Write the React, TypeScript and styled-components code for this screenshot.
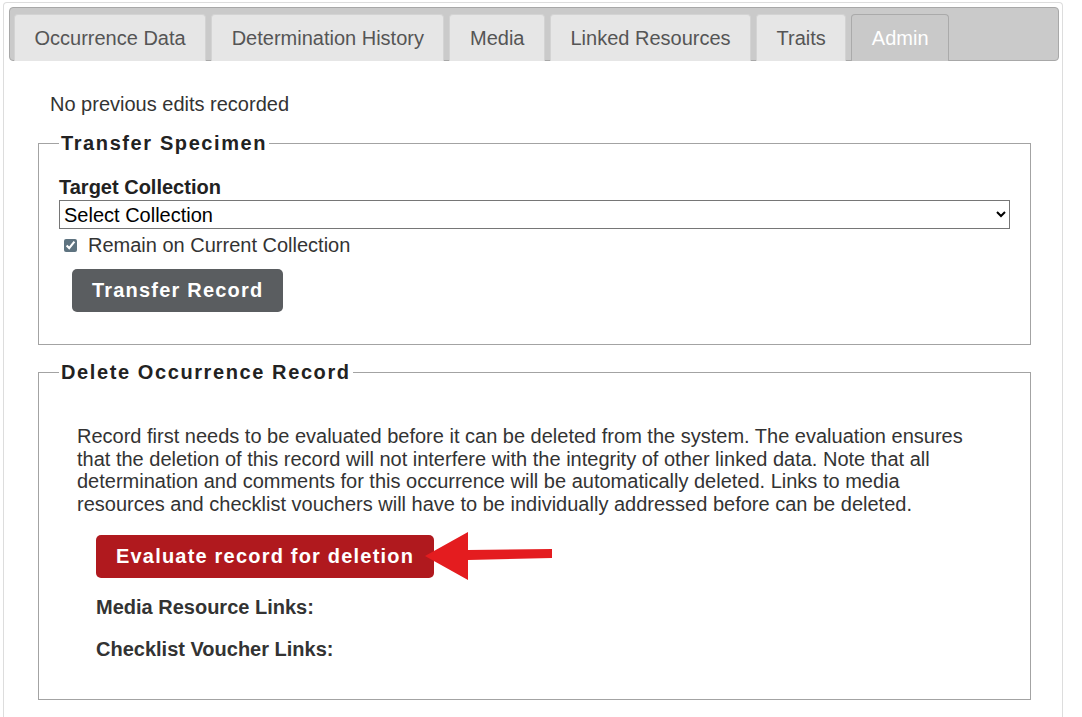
import styled, { createGlobalStyle } from "styled-components";

const GlobalStyle = createGlobalStyle`
    body {
        margin: 0;
        background: #fff;
        font-family: "Liberation Sans", Arial, sans-serif;
        color: #333;
    }
`;

const Page = styled.div`
    padding: 2px 19px 0 3px;
`;

const Tabs = styled.div`
    border: 1px solid #ddd;
    border-bottom: none;
    border-radius: 4px 4px 0 0;
    padding: 4px 3px 0 5px;
    min-height: 720px;
`;

const TabBar = styled.ul`
    display: flex;
    align-items: flex-end;
    gap: 5px;
    margin: 0;
    padding: 6px 4px 0 4px;
    list-style: none;
    height: 54px;
    box-sizing: border-box;
    background: #cacaca;
    border: 1px solid #a8a8a8;
    border-radius: 4px;
`;

const Tab = styled.li<{ $active?: boolean }>`
    height: 47px;
    box-sizing: border-box;
    display: flex;
    align-items: center;
    padding: 0 19.5px;
    margin-bottom: -1px;
    font-size: 20px;
    color: ${(p) => (p.$active ? "#fff" : "#555")};
    background: ${(p) => (p.$active ? "#c9c9c9" : "#e6e6e6")};
    border: 1px solid ${(p) => (p.$active ? "#aaa" : "#d3d3d3")};
    border-bottom: none;
    border-radius: 4px 4px 0 0;
`;

const Panel = styled.div`
    padding: 32px 28px 0 29px;
`;

const Notice = styled.div`
    padding-left: 12px;
    font-size: 20px;
    line-height: 23px;
    color: #333;
    margin-bottom: 16px;
`;

const Box = styled.fieldset<{ $bottom: number }>`
    margin: 0 0 ${(p) => p.$bottom}px 0;
    padding: 21px 20px 0 20px;
    border: 1px solid #a3a3a3;
`;

const Legend = styled.legend`
    padding: 0 2px;
    font-size: 20px;
    font-weight: bold;
    letter-spacing: 1.6px;
    color: #222;
    line-height: 23px;
`;

const FieldLabel = styled.div`
    font-size: 20px;
    font-weight: bold;
    color: #222;
    line-height: 23px;
`;

const Select = styled.select`
    display: block;
    width: 100%;
    height: 29px;
    margin-top: 1px;
    font-family: "Liberation Sans", Arial, sans-serif;
    font-size: 20px;
    color: #000;
    background: #fff;
    border: 1px solid #767676;
    border-radius: 0;
    padding: 0;
`;

const CheckRow = styled.label`
    display: flex;
    align-items: center;
    gap: 11px;
    margin: 5px 0 0 5px;
    font-size: 20px;
    line-height: 23px;
    color: #333;
`;

const Check = styled.input`
    width: 13px;
    height: 13px;
    margin: 0;
    accent-color: #5e7380;
`;

const Button = styled.button<{ $danger?: boolean }>`
    display: inline-block;
    height: 43px;
    padding: 0 20px;
    font-family: "Liberation Sans", Arial, sans-serif;
    font-size: 20px;
    font-weight: bold;
    letter-spacing: 1.2px;
    color: #fff;
    background: ${(p) => (p.$danger ? "#b0191e" : "#5a5d60")};
    border: none;
    border-radius: 5px;
`;

const TransferWrap = styled.div`
    margin: 12px 0 32px 13px;
`;

const Para = styled.p`
    margin: 20px 33px 0 18px;
    font-size: 20px;
    line-height: 22.7px;
    color: #333;
`;

const ButtonRow = styled.div`
    position: relative;
    display: inline-block;
    margin: 19px 0 0 37px;
`;

const Arrow = styled.svg`
    position: absolute;
    left: 329px;
    top: -4px;
`;

const LinkLabel = styled.div`
    margin: 0 0 0 37px;
    font-size: 20px;
    font-weight: bold;
    color: #333;
    line-height: 23px;
`;

const LinkStack = styled.div`
    display: flex;
    flex-direction: column;
    gap: 19px;
    margin: 18px 0 38px 0;
`;

const tabs = [
    "Occurrence Data",
    "Determination History",
    "Media",
    "Linked Resources",
    "Traits",
    "Admin",
];

export default function App() {
    return (
        <Page>
            <GlobalStyle />
            <Tabs>
                <TabBar>
                    {tabs.map((t) => (
                        <Tab key={t} $active={t === "Admin"}>
                            {t}
                        </Tab>
                    ))}
                </TabBar>
                <Panel>
                    <Notice>No previous edits recorded</Notice>
                    <Box $bottom={16}>
                        <Legend>Transfer Specimen</Legend>
                        <FieldLabel>Target Collection</FieldLabel>
                        <Select defaultValue="">
                            <option value="">Select Collection</option>
                        </Select>
                        <CheckRow>
                            <Check type="checkbox" defaultChecked />
                            Remain on Current Collection
                        </CheckRow>
                        <TransferWrap>
                            <Button>Transfer Record</Button>
                        </TransferWrap>
                    </Box>
                    <Box $bottom={0}>
                        <Legend>Delete Occurrence Record</Legend>
                        <Para>
                            Record first needs to be evaluated before it can be deleted from the system. The
                            evaluation ensures that the deletion of this record will not interfere with the
                            integrity of other linked data. Note that all determination and comments for this
                            occurrence will be automatically deleted. Links to media resources and checklist
                            vouchers will have to be individually addressed before can be deleted.
                        </Para>
                        <ButtonRow>
                            <Button $danger>Evaluate record for deletion</Button>
                            <Arrow width="128" height="50" viewBox="0 0 128 50">
                                <polygon
                                    points="0,25 43,1 43,19 127,18 127,27 43,29 43,49"
                                    fill="#e41c1f"
                                />
                            </Arrow>
                        </ButtonRow>
                        <LinkStack>
                            <LinkLabel>Media Resource Links:</LinkLabel>
                            <LinkLabel>Checklist Voucher Links:</LinkLabel>
                        </LinkStack>
                    </Box>
                </Panel>
            </Tabs>
        </Page>
    );
}
